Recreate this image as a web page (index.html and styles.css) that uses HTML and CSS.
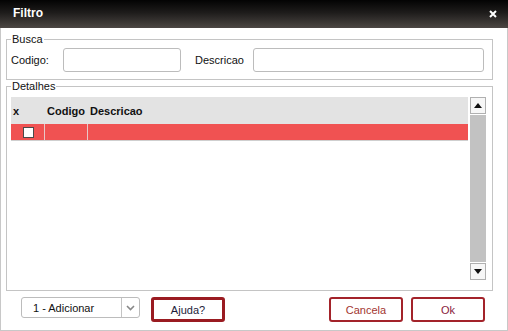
FILE: index.html
```html
<!DOCTYPE html>
<html>
<head>
<meta charset="utf-8">
<link rel="stylesheet" href="styles.css">
</head>
<body>
<div class="dialog">
  <div class="titlebar">
    <span class="title">Filtro</span>
    <svg class="close" width="8" height="8" viewBox="0 0 8 8"><path d="M1 1L7 7M7 1L1 7" stroke="#fff" stroke-width="2"/></svg>
  </div>
  <fieldset class="busca">
    <legend>Busca</legend>
    <div class="search-row">
      <label class="lbl-codigo">Codigo:</label>
      <input class="inp inp-codigo" type="text">
      <label class="lbl-desc">Descricao</label>
      <input class="inp inp-desc" type="text">
    </div>
  </fieldset>
  <fieldset class="detalhes">
    <legend>Detalhes</legend>
    <div class="grid-wrap">
      <div class="grid">
        <div class="grid-head">
          <div class="c1">x</div>
          <div class="c2">Codigo</div>
          <div class="c3">Descricao</div>
        </div>
        <div class="grid-row">
          <div class="c1"><span class="chk"></span></div>
          <div class="c2"></div>
          <div class="c3"></div>
        </div>
      </div>
      <div class="scrollbar">
        <div class="sb-btn"><svg width="8" height="5" viewBox="0 0 8 5"><path d="M4 0L8 5H0Z" fill="#111"/></svg></div>
        <div class="sb-thumb"></div>
        <div class="sb-btn"><svg width="8" height="5" viewBox="0 0 8 5"><path d="M0 0H8L4 5Z" fill="#111"/></svg></div>
      </div>
    </div>
  </fieldset>
  <div class="footer">
    <div class="select">
      <span class="sel-text">1 - Adicionar</span>
      <span class="sel-arrow"><svg width="9" height="6" viewBox="0 0 9 6"><path d="M1 1L4.5 4.5L8 1" stroke="#888" stroke-width="1.6" fill="none"/></svg></span>
    </div>
    <button class="btn btn-help">Ajuda?</button>
    <div class="spacer"></div>
    <button class="btn btn-red">Cancela</button>
    <button class="btn btn-red btn-ok">Ok</button>
  </div>
</div>
</body>
</html>
```
FILE: styles.css
```css
* { box-sizing: border-box; }
html, body { margin: 0; padding: 0; background: #fff; }
body { font-family: "Liberation Sans", Arial, sans-serif; font-size: 11px; color: #111; }

.dialog {
  width: 508px;
  height: 331px;
  border: 1px solid #c8c8c8;
  border-top: none;
  display: flex;
  flex-direction: column;
  padding: 0 0 0 5px;
  position: relative;
}
.titlebar {
  height: 28px;
  margin: 0 -1px 0 -6px;
  background: linear-gradient(#030303, #1e1c1b 45%, #4c4743);
  display: flex;
  align-items: center;
  padding: 0 11px 0 13px;
}
.title { color: #fff; font-weight: bold; font-size: 12px; flex: 1; padding-bottom: 2px; }
.close { display: block; margin-bottom: 1px; }

fieldset {
  width: 487px;
  border: 1px solid #c4c4c4;
  margin: 0;
  padding: 0 6px 0 4px;
}
legend {
  padding: 0 1px;
  font-size: 11px;
  line-height: 13px;
  color: #111;
}
.busca { margin-top: 5px; padding-top: 2px; padding-bottom: 7px; }
.search-row { display: flex; align-items: center; height: 24px; }
.search-row label { display: block; }
.lbl-codigo { width: 52px; }
.lbl-desc { width: 58px; margin-left: 14px; }
.inp {
  height: 24px;
  border: 1px solid #bcbcbc;
  border-radius: 3px;
  background: #fff;
  padding: 0;
  margin: 0;
}
.inp-codigo { width: 118px; }
.inp-desc { width: 231px; }

.detalhes { margin-top: 0; padding-top: 4px; height: 211px; padding-bottom: 8px; }
.grid-wrap { display: flex; gap: 2px; height: 183px; }
.grid { width: 457px; display: flex; flex-direction: column; }
.grid-head {
  display: flex;
  height: 27px;
  background: #e3e3e3;
  font-weight: bold;
  align-items: center;
}
.grid-head > div { padding-left: 2px; padding-top: 1px; }
.grid-row {
  display: flex;
  height: 17px;
  background: #f05252;
  border-bottom: 1px solid #cfcfcf;
}
.c1 { width: 34px; }
.c2 { width: 43px; }
.c3 { flex: 1; }
.grid-row .c1, .grid-row .c2 { border-right: 1px solid #e8c8c8; }
.grid-row .c1 { display: flex; align-items: center; justify-content: center; }
.chk {
  display: block;
  width: 11px;
  height: 11px;
  border: 1px solid #4a4a4a;
  background: #fff;
  margin-left: 1px;
}

.scrollbar { width: 16px; display: flex; flex-direction: column; gap: 1px; }
.sb-btn {
  height: 17px;
  border: 1px solid #b0b0b0;
  background: #f7f7f7;
  display: flex;
  align-items: center;
  justify-content: center;
}
.sb-thumb { flex: 1; background: #c2c2c2; }

.footer {
  display: flex;
  align-items: flex-start;
  padding: 6px 22px 0 15px;
  width: 501px;
}
.select {
  width: 119px;
  height: 21px;
  border: 1px solid #bcbcbc;
  border-radius: 3px;
  display: flex;
  align-items: center;
}
.sel-text { flex: 1; padding-left: 11px; }
.sel-arrow {
  width: 18px;
  height: 100%;
  border-left: 1px solid #c4c4c4;
  display: flex;
  align-items: center;
  justify-content: center;
}
.btn {
  font-family: "Liberation Sans", Arial, sans-serif;
  font-size: 11px;
  height: 25px;
  width: 74px;
  background: #fff;
  border-radius: 3px;
  padding: 0;
  margin: 0;
}
.btn-help { margin-left: 11px; border: 3px solid #9a1b21; color: #1c1c3a; }
.spacer { flex: 1; }
.btn-red { border: 2px solid #a3232a; color: #a23630; }
.btn-ok { margin-left: 8px; color: #8a1c3c; }
```
